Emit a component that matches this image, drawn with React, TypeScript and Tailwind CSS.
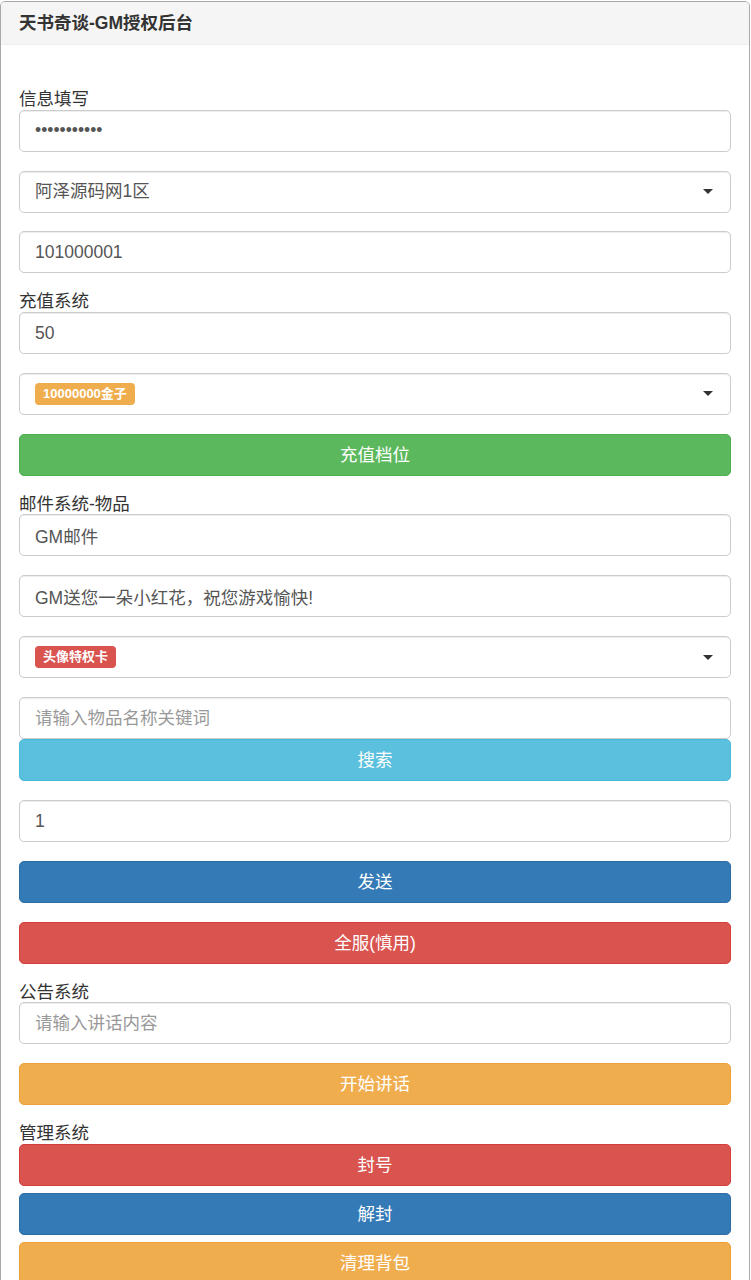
import React from "react";

const font = { fontFamily: '"Liberation Sans", "Noto Sans CJK SC", sans-serif' };

const field =
  "block w-full h-[42px] rounded-[5px] border border-[#ccc] bg-white px-[15px] text-[17.5px] text-[#555] shadow-[inset_0_1px_1px_rgba(0,0,0,0.075)] outline-none placeholder:text-[#999]";

function Label({ children }: { children: React.ReactNode }) {
  return <div className="mt-[18.9px] h-[19.75px] text-[17.5px] leading-[19.75px] text-[#333]">{children}</div>;
}

function Caret() {
  return (
    <span className="ml-auto h-0 w-0 border-x-[5px] border-t-[5px] border-x-transparent border-t-[#333]" />
  );
}

function FakeSelect({ children }: { children: React.ReactNode }) {
  return (
    <div className="mb-[18.9px] flex h-[42px] w-full items-center rounded-[5px] border border-[#ccc] bg-white pl-[15px] pr-[17px] text-[17.5px] text-[#555] shadow-[inset_0_1px_1px_rgba(0,0,0,0.075)]">
      {children}
      <Caret />
    </div>
  );
}

function Badge({ color, children }: { color: string; children: React.ReactNode }) {
  return (
    <span
      className={`inline-block rounded-[4px] px-[8px] pt-[4px] pb-[5px] text-[13px] font-bold leading-[13px] text-white ${color}`}
    >
      {children}
    </span>
  );
}

function Btn({ color, className = "", children }: { color: string; className?: string; children: React.ReactNode }) {
  return (
    <button
      type="button"
      className={`block h-[42px] w-full rounded-[5px] border text-center text-[17.5px] text-white ${color} ${className}`}
    >
      {children}
    </button>
  );
}

export default function App() {
  return (
    <div style={font} className="w-[750px] bg-white pt-px">
      <div className="overflow-hidden rounded-t-[5px] border border-[#a8a8a8]">
        {/* heading */}
        <div className="flex h-[43px] items-center border-b border-[#eee] bg-[#f5f5f5] px-[18px] text-[17.5px] font-bold text-[#333]">
          天书奇谈-GM授权后台
        </div>

        <div className="px-[18px] pt-[26px] pb-[10px]">
          <Label>信息填写</Label>
          <input type="password" readOnly value="12345678901" className={`${field} mb-[18.9px]`} />
          <FakeSelect>阿泽源码网1区</FakeSelect>
          <input readOnly value="101000001" className={field} />

          <Label>充值系统</Label>
          <input readOnly value="50" className={`${field} mb-[18.9px]`} />
          <FakeSelect>
            <Badge color="bg-[#f0ad4e]">10000000金子</Badge>
          </FakeSelect>
          <Btn color="bg-[#5cb85c] border-[#4cae4c]">充值档位</Btn>

          <Label>邮件系统-物品</Label>
          <input readOnly value="GM邮件" className={`${field} mb-[18.9px]`} />
          <input readOnly value="GM送您一朵小红花，祝您游戏愉快!" className={`${field} mb-[18.9px]`} />
          <FakeSelect>
            <Badge color="bg-[#d9534f]">头像特权卡</Badge>
          </FakeSelect>
          <input placeholder="请输入物品名称关键词" className={field} />
          <Btn color="bg-[#5bc0de] border-[#46b8da]">搜索</Btn>
          <input readOnly value="1" className={`${field} mt-[18.9px] mb-[18.9px]`} />
          <Btn color="bg-[#337ab7] border-[#2e6da4]" className="mb-[18.9px]">
            发送
          </Btn>
          <Btn color="bg-[#d9534f] border-[#d43f3a]">全服(慎用)</Btn>

          <Label>公告系统</Label>
          <input placeholder="请输入讲话内容" className={`${field} mb-[18.9px]`} />
          <Btn color="bg-[#f0ad4e] border-[#eea236]">开始讲话</Btn>

          <Label>管理系统</Label>
          <div className="flex flex-col gap-[7px]">
            <Btn color="bg-[#d9534f] border-[#d43f3a]">封号</Btn>
            <Btn color="bg-[#337ab7] border-[#2e6da4]">解封</Btn>
            <Btn color="bg-[#f0ad4e] border-[#eea236]">清理背包</Btn>
          </div>
        </div>
      </div>
    </div>
  );
}
